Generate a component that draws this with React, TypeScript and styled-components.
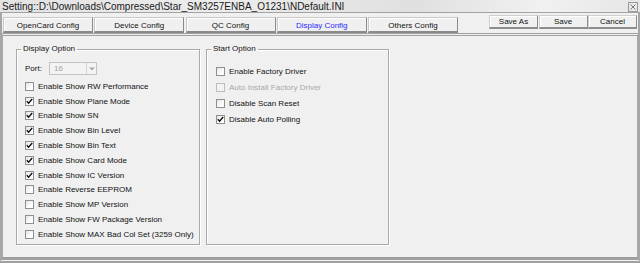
import React from "react";
import styled, { createGlobalStyle } from "styled-components";

const GlobalStyle = createGlobalStyle`
  html, body {
    margin: 0;
    padding: 0;
    background: #f0f0f0;
  }
  body {
    font-family: "Liberation Sans", Arial, sans-serif;
    font-size: 8px;
    color: #111;
  }
`;

const Window = styled.div`
  width: 640px;
  height: 263px;
  box-sizing: border-box;
  display: flex;
  flex-direction: column;
  background: #f0f0f0;
  overflow: hidden;
`;

const TitleBar = styled.div`
  height: 12px;
  border-bottom: 1px solid #a3a3a3;
  display: flex;
  align-items: center;
  justify-content: space-between;
  padding: 0 2px 0 2px;
  background: linear-gradient(90deg, #e3e3e3 0%, #ececec 35%, #e0e0e0 65%, #f1f1f1 85%, #e6e6e6 100%);
  font-size: 10px;
  color: #1a1a1a;
  white-space: nowrap;
`;

const CloseBox = styled.div`
  width: 10px;
  height: 10px;
  margin-top: 1px;
  box-sizing: border-box;
  border: 1px solid #9a9a9a;
  background: #e9e9e9;
  display: flex;
  align-items: center;
  justify-content: center;
`;

const Body = styled.div`
  flex: 1;
  display: flex;
  flex-direction: column;
  border-left: 2px solid #a6a6a6;
  border-right: 2px solid #a6a6a6;
  border-bottom: 5px double #a0a0a0;
`;

const Toolbar = styled.div`
  height: 20px;
  display: flex;
  align-items: flex-start;
  padding: 0 1px 0 1px;
`;

const Tabs = styled.div`
  display: flex;
  gap: 1.25px;
  margin-top: 4px;
`;

const Tab = styled.div<{ $active?: boolean }>`
  width: 90px;
  height: 16px;
  box-sizing: border-box;
  display: flex;
  align-items: center;
  justify-content: center;
  background: #f0f0f0;
  border-top: 1px solid #c8c8c8;
  border-left: 1px solid #c8c8c8;
  border-right: 1px solid #8a8a8a;
  border-bottom: 2px solid #8a8a8a;
  box-shadow: inset 1px 1px 0 #ffffff;
  color: ${(p) => (p.$active ? "#2b2bff" : "#111")};
  padding-top: 1px;
`;

const Actions = styled.div`
  margin-left: auto;
  margin-top: 2px;
  display: flex;
  gap: 0.5px;
`;

const ActionButton = styled.div`
  width: 49px;
  height: 14px;
  box-sizing: border-box;
  display: flex;
  align-items: center;
  justify-content: center;
  background: #f0f0f0;
  border-top: 1px solid #d0d0d0;
  border-left: 1px solid #d0d0d0;
  border-right: 1px solid #8d8d8d;
  border-bottom: 2px solid #8d8d8d;
  box-shadow: inset 1px 1px 0 #ffffff;
  color: #111;
`;

const Panel = styled.div`
  flex: 1;
  display: flex;
  align-items: flex-start;
  gap: 6px;
  border-top: 3px double #a0a0a0;
  border-left: 1px solid #a8a8a8;
  border-right: 1px solid #a8a8a8;
  border-bottom: 1px solid #9a9a9a;
  padding: 8px 0 0 13px;
`;

const Group = styled.fieldset<{ $width: number }>`
  width: ${(p) => p.$width}px;
  height: 201px;
  box-sizing: border-box;
  margin: 0;
  min-width: 0;
  border: 1px solid #a9a9a9;
  box-shadow: inset 1px 1px 0 #ffffff, 1px 1px 0 #ffffff;
  padding: 0;
  display: flex;
  flex-direction: column;
`;

const Legend = styled.legend`
  margin-left: 4px;
  padding: 0 2px;
  font-size: 8px;
  line-height: 10px;
  color: #111;
`;

const GroupBody = styled.div<{ $top: number; $left: number }>`
  display: flex;
  flex-direction: column;
  padding: ${(p) => p.$top}px 0 0 ${(p) => p.$left}px;
`;

const PortRow = styled.div`
  display: flex;
  align-items: center;
  height: 13px;
  margin-bottom: 4px;
`;

const PortLabel = styled.span`
  width: 24px;
`;

const Combo = styled.div`
  width: 48px;
  height: 13px;
  box-sizing: border-box;
  border: 1px solid #c3c3c3;
  background: #f3f3f3;
  display: flex;
  align-items: center;
  justify-content: space-between;
  padding-left: 4px;
  color: #a3a3a3;
`;

const ComboArrow = styled.div`
  width: 10px;
  height: 11px;
  box-sizing: border-box;
  border-left: 1px solid #d6d6d6;
  display: flex;
  align-items: center;
  justify-content: center;
`;

const Row = styled.div<{ $h: number; $disabled?: boolean }>`
  height: ${(p) => p.$h}px;
  display: flex;
  align-items: center;
  gap: 4px;
  white-space: nowrap;
  color: ${(p) => (p.$disabled ? "#a8a8a8" : "#111")};
`;

const Box = styled.span<{ $disabled?: boolean }>`
  width: 9px;
  height: 9px;
  box-sizing: border-box;
  border: 1px solid ${(p) => (p.$disabled ? "#bdbdbd" : "#8e8f8f")};
  background: ${(p) =>
    p.$disabled ? "#f2f2f2" : "linear-gradient(135deg, #e4e4e4 0%, #ffffff 70%)"};
  display: flex;
  align-items: center;
  justify-content: center;
  flex: none;
`;

type Item = { label: string; checked?: boolean; disabled?: boolean };

const displayItems: Item[] = [
  { label: "Enable Show RW Performance" },
  { label: "Enable Show Plane Mode", checked: true },
  { label: "Enable Show SN", checked: true },
  { label: "Enable Show Bin Level", checked: true },
  { label: "Enable Show Bin Text", checked: true },
  { label: "Enable Show Card Mode", checked: true },
  { label: "Enable Show IC Version", checked: true },
  { label: "Enable Reverse EEPROM" },
  { label: "Enable Show MP Version" },
  { label: "Enable Show FW Package Version" },
  { label: "Enable Show MAX Bad Col Set (3259 Only)" },
];

const startItems: Item[] = [
  { label: "Enable Factory Driver" },
  { label: "Auto Install Factory Driver", disabled: true },
  { label: "Disable Scan Reset" },
  { label: "Disable Auto Polling", checked: true },
];

function Check({ item, h }: { item: Item; h: number }) {
  return (
    <Row $h={h} $disabled={item.disabled}>
      <Box $disabled={item.disabled}>
        {item.checked && (
          <svg width="7" height="7" viewBox="0 0 7 7">
            <path d="M0.8 3.2 L2.6 5.2 L6.2 1" stroke="#111" strokeWidth="1.4" fill="none" />
          </svg>
        )}
      </Box>
      <span>{item.label}</span>
    </Row>
  );
}

export default function App() {
  return (
    <>
      <GlobalStyle />
      <Window>
        <TitleBar>
          <span>Setting::D:\Downloads\Compressed\Star_SM3257ENBA_O1231\NDefault.INI</span>
          <CloseBox>
            <svg width="6" height="6" viewBox="0 0 6 6">
              <path d="M0.5 0.5 L5.5 5.5 M5.5 0.5 L0.5 5.5" stroke="#7a7a7a" strokeWidth="1" />
            </svg>
          </CloseBox>
        </TitleBar>
        <Body>
          <Toolbar>
            <Tabs>
              <Tab>OpenCard Config</Tab>
              <Tab>Device Config</Tab>
              <Tab>QC Config</Tab>
              <Tab $active>Display Config</Tab>
              <Tab>Others Config</Tab>
            </Tabs>
            <Actions>
              <ActionButton>Save As</ActionButton>
              <ActionButton>Save</ActionButton>
              <ActionButton>Cancel</ActionButton>
            </Actions>
          </Toolbar>
          <Panel>
            <Group $width={184}>
              <Legend>Display Option</Legend>
              <GroupBody $top={8} $left={8}>
                <PortRow>
                  <PortLabel>Port:</PortLabel>
                  <Combo>
                    <span>16</span>
                    <ComboArrow>
                      <svg width="6" height="4" viewBox="0 0 6 4">
                        <path d="M0 0.5 L6 0.5 L3 3.5 Z" fill="#a8a8a8" />
                      </svg>
                    </ComboArrow>
                  </Combo>
                </PortRow>
                {displayItems.map((it) => (
                  <Check key={it.label} item={it} h={14.8} />
                ))}
              </GroupBody>
            </Group>
            <Group $width={183}>
              <Legend>Start Option</Legend>
              <GroupBody $top={9} $left={9}>
                {startItems.map((it) => (
                  <Check key={it.label} item={it} h={16} />
                ))}
              </GroupBody>
            </Group>
          </Panel>
        </Body>
      </Window>
    </>
  );
}
